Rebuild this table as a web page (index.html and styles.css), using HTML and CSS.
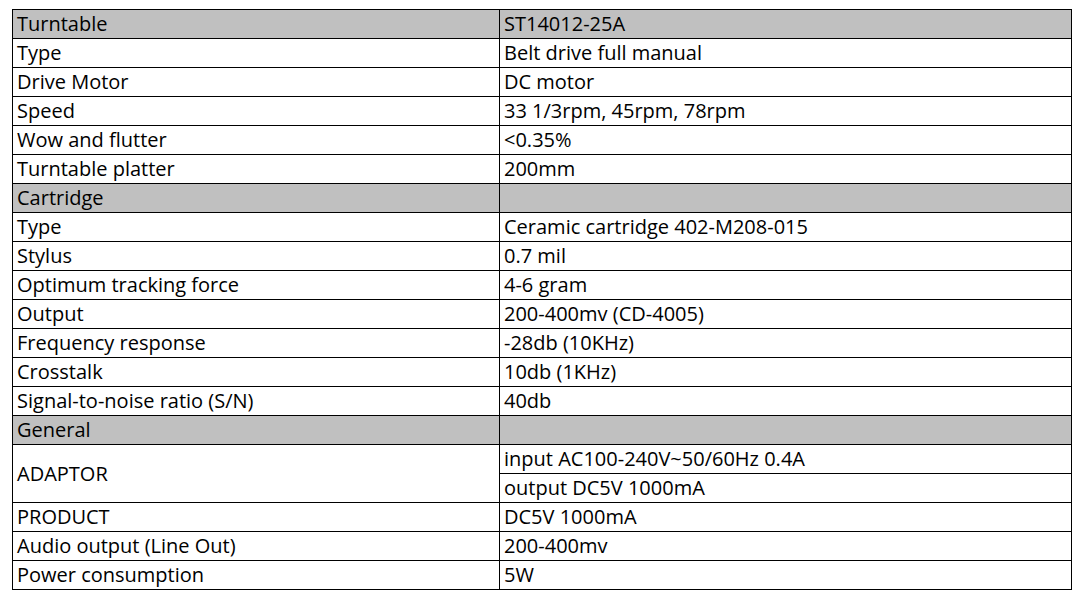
FILE: index.html
```html
<!DOCTYPE html>
<html>
<head>
<meta charset="utf-8">
<link rel="stylesheet" href="styles.css">
</head>
<body>
<table class="spec">
<colgroup><col class="c1"><col class="c2"></colgroup>
<tr class="head"><td>Turntable</td><td>ST14012-25A</td></tr>
<tr><td>Type</td><td>Belt drive full manual</td></tr>
<tr><td>Drive Motor</td><td>DC motor</td></tr>
<tr><td>Speed</td><td>33 1/3rpm, 45rpm, 78rpm</td></tr>
<tr><td>Wow and flutter</td><td>&lt;0.35%</td></tr>
<tr><td>Turntable platter</td><td>200mm</td></tr>
<tr class="head"><td>Cartridge</td><td></td></tr>
<tr><td>Type</td><td>Ceramic cartridge 402-M208-015</td></tr>
<tr><td>Stylus</td><td>0.7 mil</td></tr>
<tr><td>Optimum tracking force</td><td>4-6 gram</td></tr>
<tr><td>Output</td><td>200-400mv (CD-4005)</td></tr>
<tr><td>Frequency response</td><td>-28db (10KHz)</td></tr>
<tr><td>Crosstalk</td><td>10db (1KHz)</td></tr>
<tr><td>Signal-to-noise ratio (S/N)</td><td>40db</td></tr>
<tr class="head"><td>General</td><td></td></tr>
<tr><td rowspan="2">ADAPTOR</td><td>input AC100-240V~50/60Hz 0.4A</td></tr>
<tr><td>output DC5V 1000mA</td></tr>
<tr><td>PRODUCT</td><td>DC5V 1000mA</td></tr>
<tr><td>Audio output (Line Out)</td><td>200-400mv</td></tr>
<tr><td>Power consumption</td><td>5W</td></tr>
</table>
</body>
</html>
```
FILE: styles.css
```css
html, body {
  margin: 0;
  padding: 0;
  background: #fff;
}
body {
  padding: 9px 0 0 12px;
}
.spec {
  border-collapse: collapse;
  width: 1059px;
  table-layout: fixed;
  font-family: "Open Sans", "Liberation Sans", sans-serif;
  font-size: 20px;
  color: #000;
}
.c1 { width: 487px; }
.c2 { width: 572px; }
.spec td {
  border: 1px solid #000;
  padding: 0 4px;
  line-height: 28px;
  white-space: nowrap;
  vertical-align: middle;
  overflow: hidden;
}
.spec tr.head td {
  background: #c0c0c0;
}
```
